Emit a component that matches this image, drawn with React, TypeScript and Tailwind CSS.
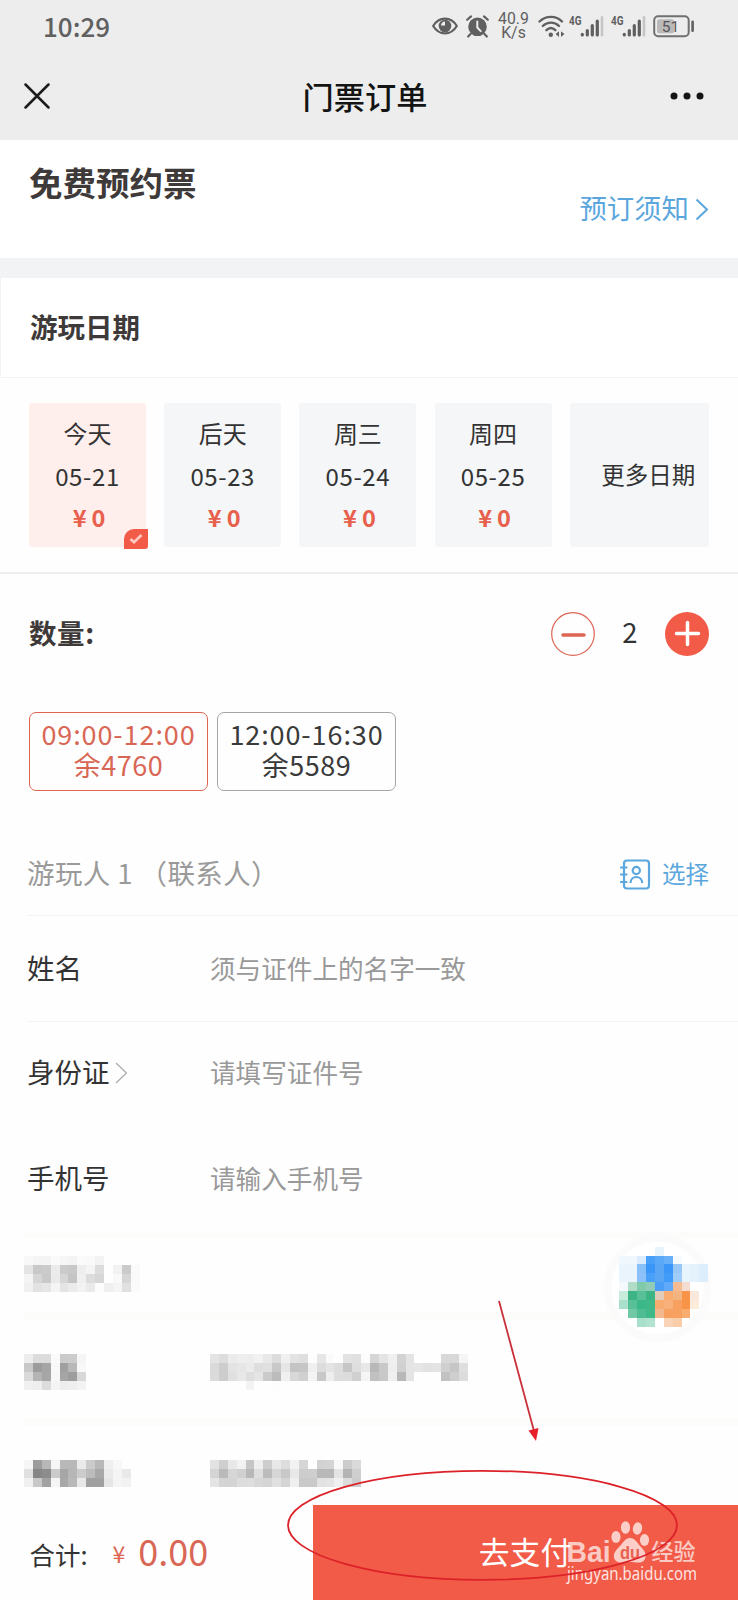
import clsx from 'clsx'

const dates = [
  { label: '今天', date: '05-21', active: true },
  { label: '后天', date: '05-23' },
  { label: '周三', date: '05-24' },
  { label: '周四', date: '05-25' },
]

// Masked rows: two hex digits of grey per cell
const maskedTitle = [
  'f8f4f4faf6f3faf9f3ffffffff',
  'e4c9cbebcbc8eef4dcfff2cbfa',
  'f4d6c9ead6c4f0dcd6fff9d6fa',
  'f0e2e6f4e4ebf2eafceff5e0fa',
]
const maskedName = ['eddcdcfacbccf5', 'c89ca5f8a0b8f8', 'd9b4a6f7a59dd8', 'f0eedcf4edeff3']
const maskedNameHint = [
  'e4ddebeeedf2e8dcf0e3dfffe6faffe2e0fcd6e4f0d3e4ffffffd8d8f5',
  'dacde3e6ebdee0c8e6c4c6efdce4ddc6dee8b8c8eed0e4e6e2e4d0c6de',
  'dbcde0e8dee4cabcf0d8d0f4c8eedddcd0f5c0c8f0b8e4ffffffc2cedc',
  'fffffffff3fffffdffffffffffffffffffffffffffffffffffffffffff',
]
const maskedId = ['f69cb8f6b8b8eacbb8eff8ff', 'e0868ccba6b6ccbca8eaf4e9', 'f0c8a2f5a8b8e8a0a0e6f5f2']
const maskedIdHint = [
  'e2cfe8f2c6efcde8ddf2d6ffd2d4f8ccda',
  'd4bad6d0b8debcd6c8e8cdceb8b8e4b4cf',
  'e4d4d4ddded8d5e0d4efc9c9e2e4f0dccc',
]

// [column, row, colour]
const bubbleCells: [number, number, string][] = [
  [4, 0, '#e8f4fb'],
  [0, 1, '#f0f7fd'], [1, 1, '#f0f7fd'], [2, 1, '#dcecfc'], [3, 1, '#48a0f8'], [4, 1, '#5aa8f8'], [5, 1, '#68b0f8'], [6, 1, '#f6fafd'],
  [0, 2, '#eaf4fd'], [1, 2, '#eaf4fd'], [2, 2, '#88c0f8'], [3, 2, '#3a96f8'], [4, 2, '#5aa6f5'], [5, 2, '#3a96f8'], [6, 2, '#98c8f8'], [7, 2, '#e8f4fc'], [8, 2, '#e4f2fc'], [9, 2, '#dceefb'],
  [0, 3, '#eaf4fd'], [1, 3, '#eaf4fd'], [2, 3, '#8cc0f8'], [3, 3, '#48a0f8'], [4, 3, '#5aa6f5'], [5, 3, '#3f9af8'], [6, 3, '#a0ccf8'], [7, 3, '#e8f4fc'], [8, 3, '#e4f2fc'], [9, 3, '#dceefb'],
  [0, 4, '#f4f9fd'], [1, 4, '#b0dcc8'], [2, 4, '#80ccaa'], [3, 4, '#90ccb8'], [4, 4, '#4a9ef8'], [5, 4, '#60a8f8'], [6, 4, '#f4bc90'], [7, 4, '#f4dcd0'],
  [0, 5, '#c8ecdc'], [1, 5, '#3cb484'], [2, 5, '#58c098'], [3, 5, '#3cb484'], [4, 5, '#e0ccb8'], [5, 5, '#f8ac70'], [6, 5, '#f4b480'], [7, 5, '#f89448'], [8, 5, '#fbe8dc'],
  [0, 6, '#a8e0cc'], [1, 6, '#58c098'], [2, 6, '#3cb888'], [3, 6, '#40b888'], [4, 6, '#f8ac70'], [5, 6, '#f8b07a'], [6, 6, '#f8a060'], [7, 6, '#f89448'], [8, 6, '#fcecdc'],
  [1, 7, '#70c8a4'], [2, 7, '#50bc94'], [3, 7, '#40b888'], [4, 7, '#f4b890'], [5, 7, '#f8a060'], [6, 7, '#f8a060'], [7, 7, '#f8ac70'],
  [2, 8, '#a8e0cc'], [3, 8, '#b0e4d0'], [5, 8, '#fbd4b8'], [6, 8, '#fbcca8'],
]

const CELL = 8.89

const Mosaic = ({ rows, className }: { rows: string[]; className?: string }) => {
  const cols = rows[0].length / 2
  return (
    <svg
      className={clsx('shrink-0', className)}
      width={cols * CELL}
      height={rows.length * CELL}
      viewBox={`0 0 ${cols} ${rows.length}`}
      shapeRendering="crispEdges"
    >
      {rows.map((row, y) =>
        Array.from({ length: cols }, (_, x) => {
          const c = row.slice(x * 2, x * 2 + 2)
          return c === 'ff' ? null : <rect key={`${x}-${y}`} x={x} y={y} width={1} height={1} fill={`#${c}${c}${c}`} />
        })
      )}
    </svg>
  )
}

const Signal = () => (
  <svg width="35" height="23" viewBox="0 0 35 23" className="shrink-0 overflow-visible">
    <text x="0" y="10" fontSize="13.5" fontWeight="700" fill="#606060" textLength="12.5" lengthAdjust="spacingAndGlyphs" fontFamily="Roboto, sans-serif">
      4G
    </text>
    <g strokeWidth="3.2" strokeLinecap="round" stroke="#606060">
      <path d="M13.3 19.3v.6M18.3 15.5v4.4M23.3 10.5v9.4M28.3 6v13.900" />
      <path d="M33 2.2v18.1" stroke="#c6c6c6" strokeWidth="2.6" />
    </g>
  </svg>
)

const StatusBar = () => (
  <div className="flex h-[52px] items-center pr-[43px] pl-[43px] text-[#606060]">
    <span className="text-[26px] leading-none font-medium">10:29</span>

    <div className="ml-auto flex items-center">
      <svg width="26" height="18" viewBox="0 0 26 18">
        <path d="M1.2 9C7-.8 19-.8 24.8 9 19 18.8 7 18.8 1.2 9Z" fill="none" stroke="#606060" strokeWidth="2.2" />
        <circle cx="13" cy="9" r="6.3" fill="#606060" />
        <path d="M13 8.5V4.5A4.3 4.3 0 0 0 9 8.5Z" fill="#ededed" />
      </svg>
      <svg width="23" height="23" viewBox="0 0 23 23" className="ml-[7.5px]">
        <circle cx="11.5" cy="11.8" r="9.3" fill="#606060" />
        <path d="M1.2 4.8 5 1.4M21.8 4.8 18 1.4M4.5 19 2.2 21.5M18.5 19l2.3 2.5" stroke="#606060" strokeWidth="2.2" strokeLinecap="round" />
        <path d="M11.3 6.5v6l3.4 3.6" fill="none" stroke="#ededed" strokeWidth="2" strokeLinecap="round" />
      </svg>
      <div className="ml-[9px] w-[32px] text-center font-[Roboto,sans-serif] text-[15.8px] leading-[14.5px]">
        <div>40.9</div>
        <div>K/s</div>
      </div>
      <svg width="27" height="23" viewBox="0 0 27 23" className="ml-[8px]">
        <g fill="none" stroke="#606060" strokeWidth="2.4" strokeLinecap="round">
          <path d="M1.5 6.5C8 .3 18 .3 24 6.5" />
          <path d="M4.8 11C9.5 6.5 16.5 6.5 21 11" />
          <path d="M8.4 15.2c2.7-2.6 6.2-2.6 9 0" />
        </g>
        <circle cx="12.8" cy="19.8" r="2.2" fill="#606060" />
        <path d="M21 16.2V22l-3.400-2.900ZM23 16.2V22l3.400-2.900Z" fill="#606060" />
      </svg>
      <div className="ml-[4.5px] flex gap-[6.5px]">
        <Signal />
        <Signal />
      </div>
      <svg width="42" height="23" viewBox="0 0 42 23" className="ml-[7.5px]">
        <rect x="1.2" y="1.2" width="34.5" height="20" rx="4" fill="none" stroke="#707070" strokeWidth="2" />
        <rect x="4" y="4.2" width="17" height="14" rx="2" fill="#b9b9b9" />
        <rect x="38.3" y="5.5" width="2.6" height="11.5" rx="1.2" fill="#606060" />
        <text x="17.5" y="16.8" textAnchor="middle" fontSize="15.5" fill="#555" fontFamily="Roboto, sans-serif">
          51
        </text>
      </svg>
    </div>
  </div>
)

const TitleBar = () => (
  <div className="grid h-[88px] grid-cols-3 items-center pr-[33px] pl-[24px]">
    <svg width="26" height="26" viewBox="0 0 26 26">
      <path d="M1.5 1.5l23 23M24.5 1.5l-23 23" stroke="#1c1c1c" strokeWidth="2.5" strokeLinecap="round" />
    </svg>
    <h1 className="pl-[1px] text-center text-[31.2px] leading-none font-medium text-[#141414]">门票订单</h1>
    <svg width="36" height="8" viewBox="0 0 36 8" className="ml-auto" fill="#141414">
      <circle cx="5" cy="4" r="3.5" />
      <circle cx="18" cy="4" r="3.5" />
      <circle cx="31" cy="4" r="3.5" />
    </svg>
  </div>
)

const DateCard = ({ label, date, active }: { label: string; date: string; active?: boolean }) => (
  <button
    className={clsx(
      'relative flex h-[144px] w-[117px] flex-col items-center rounded-[3px] pt-[11px] text-[24px] text-[#333]',
      active ? 'bg-[#feeeec]' : 'bg-[#f4f6f8]'
    )}
  >
    <span className="leading-[38px]">{label}</span>
    <span className="mt-[5px] tracking-[0.6px] leading-[38px]">{date}</span>
    <span className="mt-[3px] flex gap-[5px] pl-[3px] text-[23.5px] leading-[38px] font-bold text-[#e8604c]">
      <span>¥</span>
      <span>0</span>
    </span>
    {active && (
      <span className="absolute -right-[2px] -bottom-[2px] grid h-5 w-6 place-items-center rounded-tl-[10px] rounded-br-[3px] bg-[#f15b48]">
        <svg width="14" height="12" viewBox="0 0 14 12">
          <path d="M1.5 6 5 9.2 12.5 2" fill="none" stroke="#ffc9c0" strokeWidth="2.8" />
        </svg>
      </span>
    )}
  </button>
)

const TimeSlot = ({ time, left, active }: { time: string; left: number; active?: boolean }) => (
  <button
    className={clsx(
      'flex h-[79px] w-[179px] flex-col items-center rounded-[7px] border-[1.5px] pt-[5px] text-[27px] leading-[31px]',
      active ? 'border-[#dd6552] text-[#d96755]' : 'border-[#a5a5a5] text-[#3a3a3a]'
    )}
  >
    <span className="tracking-[0.9px] whitespace-nowrap">{time}</span>
    <span className="tracking-[0.5px]">余{left}</span>
  </button>
)

const Field = ({ label, hint, arrow }: { label: string; hint: string; arrow?: boolean }) => (
  <div className="flex h-full items-center">
    <div className="flex w-[183px] items-center text-[27.5px] text-[#333]">
      <span className="leading-none">{label}</span>
      {arrow && (
        <svg width="13" height="22" viewBox="0 0 13 22" className="mt-[2px] ml-[5px]">
          <path d="m1 1 10.5 10L1 21" fill="none" stroke="#aaa" strokeWidth="1.2" />
        </svg>
      )}
    </div>
    <span className="text-[25.6px] leading-none text-[#999]">{hint}</span>
  </div>
)

const Watermark = () => (
  <svg width="134" height="64" viewBox="0 0 134 64" fill="#fff" fillOpacity="0.7" className="overflow-visible">
    <text x="0.5" y="41.5" fontSize="29.5" fontWeight="700" textLength="44" lengthAdjust="spacingAndGlyphs" fontFamily="'Liberation Sans', sans-serif">
      Bai
    </text>
    <ellipse cx="50" cy="17" rx="4.6" ry="6" />
    <ellipse cx="59.5" cy="7.5" rx="4.6" ry="6.3" />
    <ellipse cx="71.5" cy="8.5" rx="4.6" ry="6.2" transform="rotate(12 71.5 8.5)" />
    <ellipse cx="78.5" cy="20" rx="4.6" ry="6" />
    <path d="M64 18c5 0 7.5 5 10.5 8.5 4 4 6.5 8 4.5 12.5-2.5 5.500-9 3-15 3s-13 2.500-15.500-3c-2-5 1-8.500 5-12.500C57 23 59 18 64 18Z" />
    <text x="54" y="38.5" fontSize="17.5" fontWeight="700" textLength="20" lengthAdjust="spacingAndGlyphs" fill="#e8604f" fillOpacity="1" fontFamily="'Liberation Sans', sans-serif">
      du
    </text>
    <text x="85.5" y="39.5" fontSize="22.5" fontWeight="500" textLength="44" lengthAdjust="spacingAndGlyphs">
      经验
    </text>
    <text x="1" y="59.5" fontSize="17.5" fillOpacity="0.85" textLength="130" lengthAdjust="spacingAndGlyphs" fontFamily="'Noto Sans', sans-serif">
      jingyan.baidu.com
    </text>
  </svg>
)

export default function App() {
  return (
    <div className="relative flex h-[1600px] w-[738px] flex-col overflow-hidden bg-[#fefefe] font-['Noto_Sans_CJK_SC',sans-serif]">
      <header className="h-[140px] shrink-0 bg-[#ededed]">
        <StatusBar />
        <TitleBar />
      </header>

      <section className="flex h-[118px] shrink-0 justify-between bg-white pr-[29px] pl-[29px]">
        <h2 className="pt-[25px] text-[33.5px] leading-[34px] font-bold text-[#3e3a39]">免费预约票</h2>
        <div className="flex items-center pt-[20px] text-[27.4px] text-[#5ba7dd]">
          <span className="pb-[2px] leading-none">预订须知</span>
          <svg width="14" height="23" viewBox="0 0 14 23" className="ml-[6px]">
            <path d="m1.5 1.5 10.5 10-10.5 10" fill="none" stroke="#5ba7dd" strokeWidth="2" />
          </svg>
        </div>
      </section>

      <div className="h-[20px] shrink-0 bg-[#f1f3f5]" />

      <section className="flex h-[100px] shrink-0 items-center border-b border-l border-[#f3f3f3] bg-white pb-[2px] pl-[29px]">
        <h3 className="text-[27.5px] leading-none font-bold text-[#3e3a39]">游玩日期</h3>
      </section>

      <section className="flex h-[196px] shrink-0 gap-[18.2px] border-b-2 border-[#eeeeee] pt-[25px] pl-[29px]">
        {dates.map((d) => (
          <DateCard key={d.date} {...d} />
        ))}
        <button className="h-[144px] w-[139px] rounded-[3px] bg-[#f4f6f8] pl-[18px] text-[23.5px] text-[#333]">更多日期</button>
      </section>

      <section className="flex h-[118px] shrink-0 items-center justify-between pt-[1px] pr-[29px] pl-[29px]">
        <h3 className="pb-[2px] text-[27.5px] leading-none font-bold tracking-[0.6px] text-[#3e3a39]">数量:</h3>
        <div className="flex items-center">
          <svg width="44" height="44" viewBox="0 0 44 44">
            <circle cx="22" cy="22" r="21.3" fill="none" stroke="#dd6552" strokeWidth="1.2" />
            <path d="M12 23h21" stroke="#dd6552" strokeWidth="3.5" strokeLinecap="round" />
          </svg>
          <span className="w-[70px] pb-[3px] text-center text-[27.5px] leading-none text-[#333]">2</span>
          <svg width="44" height="44" viewBox="0 0 44 44">
            <circle cx="22" cy="22" r="22" fill="#f15b48" />
            <path d="M11.5 21.5h22M22.5 10.5v22" stroke="#fff" strokeWidth="3.5" strokeLinecap="round" />
          </svg>
        </div>
      </section>

      <section className="flex h-[125px] shrink-0 gap-[9px] pt-[20px] pl-[29px]">
        <TimeSlot time="09:00-12:00" left={4760} active />
        <TimeSlot time="12:00-16:30" left={5589} />
      </section>

      <section className="shrink-0 pl-[27px]">
        <div className="flex h-[99px] items-center justify-between border-b border-[#f2f2f2] pt-[15px] pr-[29px]">
          <span className="pb-[1px] text-[27.5px] leading-none tracking-[0.4px] whitespace-pre text-[#9a9a9a]">游玩人 1 （联系人）</span>
          <div className="flex items-center text-[#5ba7dd]">
            <svg width="31" height="31" viewBox="0 0 31 31" fill="none" stroke="#5ba7dd" strokeWidth="2.2" className="mt-[1px]">
              <rect x="4" y="1.5" width="25" height="28" rx="3" />
              <path d="M1 8.5h5.5M1 15.5h5.5M1 23h5.5" strokeLinecap="round" />
              <circle cx="16.3" cy="11.5" r="3.6" />
              <path d="M10.5 24c.2-8 11.5-8 11.7 0" />
            </svg>
            <span className="ml-[11px] text-[23.5px] leading-none">选择</span>
          </div>
        </div>
        <div className="h-[106px] border-b border-[#f2f2f2] pb-[2px]">
          <Field label="姓名" hint="须与证件上的名字一致" />
        </div>
        <div className="h-[106px] pb-[6px]">
          <Field label="身份证" hint="请填写证件号" arrow />
        </div>
        <div className="h-[104px] pb-[4px]">
          <Field label="手机号" hint="请输入手机号" />
        </div>
      </section>

      <section className="shrink-0 pl-[24px]">
        <div className="h-[80px] border-t-[6px] border-[#fcfcfa] pt-[18px]">
          <Mosaic rows={maskedTitle} />
        </div>
        <div className="flex h-[106px] items-start border-t-[8px] border-[#fcfcfa] pt-[34px]">
          <Mosaic rows={maskedName} />
          <Mosaic rows={maskedNameHint} className="ml-[124px]" />
        </div>
        <div className="flex h-[87px] items-start border-t-[8px] border-[#fcfcfa] pt-[34px]">
          <Mosaic rows={maskedId} />
          <Mosaic rows={maskedIdHint} className="ml-[79.5px]" />
        </div>
      </section>

      <footer className="mt-auto flex h-[96px] shrink-0">
        <div className="flex w-[313px] items-center pt-[1px] pl-[29.5px]">
          <span className="text-[25.5px] leading-none text-[#333]">合计:</span>
          <span className="ml-[25px] text-[23px] leading-none text-[#dd6552]">¥</span>
          <span className="ml-[13px] pb-[8px] text-[36px] leading-none text-[#d96755]">0.00</span>
        </div>
        <button className="flex-1 bg-[#f15b48] pr-[1px] pb-[4px] text-[30.8px] leading-none text-white">去支付</button>
      </footer>

      {/* floating service bubble */}
      <svg className="absolute top-[1228px] left-[600px]" width="120" height="120" viewBox="0 0 120 120" shapeRendering="crispEdges">
        <circle cx="57.5" cy="60" r="50" fill="#fff" stroke="#fbfbfb" strokeWidth="8" shapeRendering="auto" />
        <g transform={`translate(19.3 18.7) scale(${CELL})`}>
          {bubbleCells.map(([x, y, fill]) => (
            <rect key={`${x}-${y}`} x={x} y={y} width={1} height={1} fill={fill} />
          ))}
        </g>
      </svg>

      <div className="absolute top-[1520px] left-[566px]">
        <Watermark />
      </div>

      {/* pointer to the pay button */}
      <svg className="absolute top-[1290px] left-[280px]" width="410" height="300" viewBox="280 1290 410 300">
        <ellipse cx="482.5" cy="1525.3" rx="194.5" ry="54.5" fill="none" stroke="#dc2228" strokeWidth="1.8" />
        <path d="m499 1301 35 130" stroke="#c9303a" strokeWidth="1.8" />
        <path d="m528.5 1430.5 10-2.5-2.5 13Z" fill="#e62129" />
      </svg>
    </div>
  )
}
